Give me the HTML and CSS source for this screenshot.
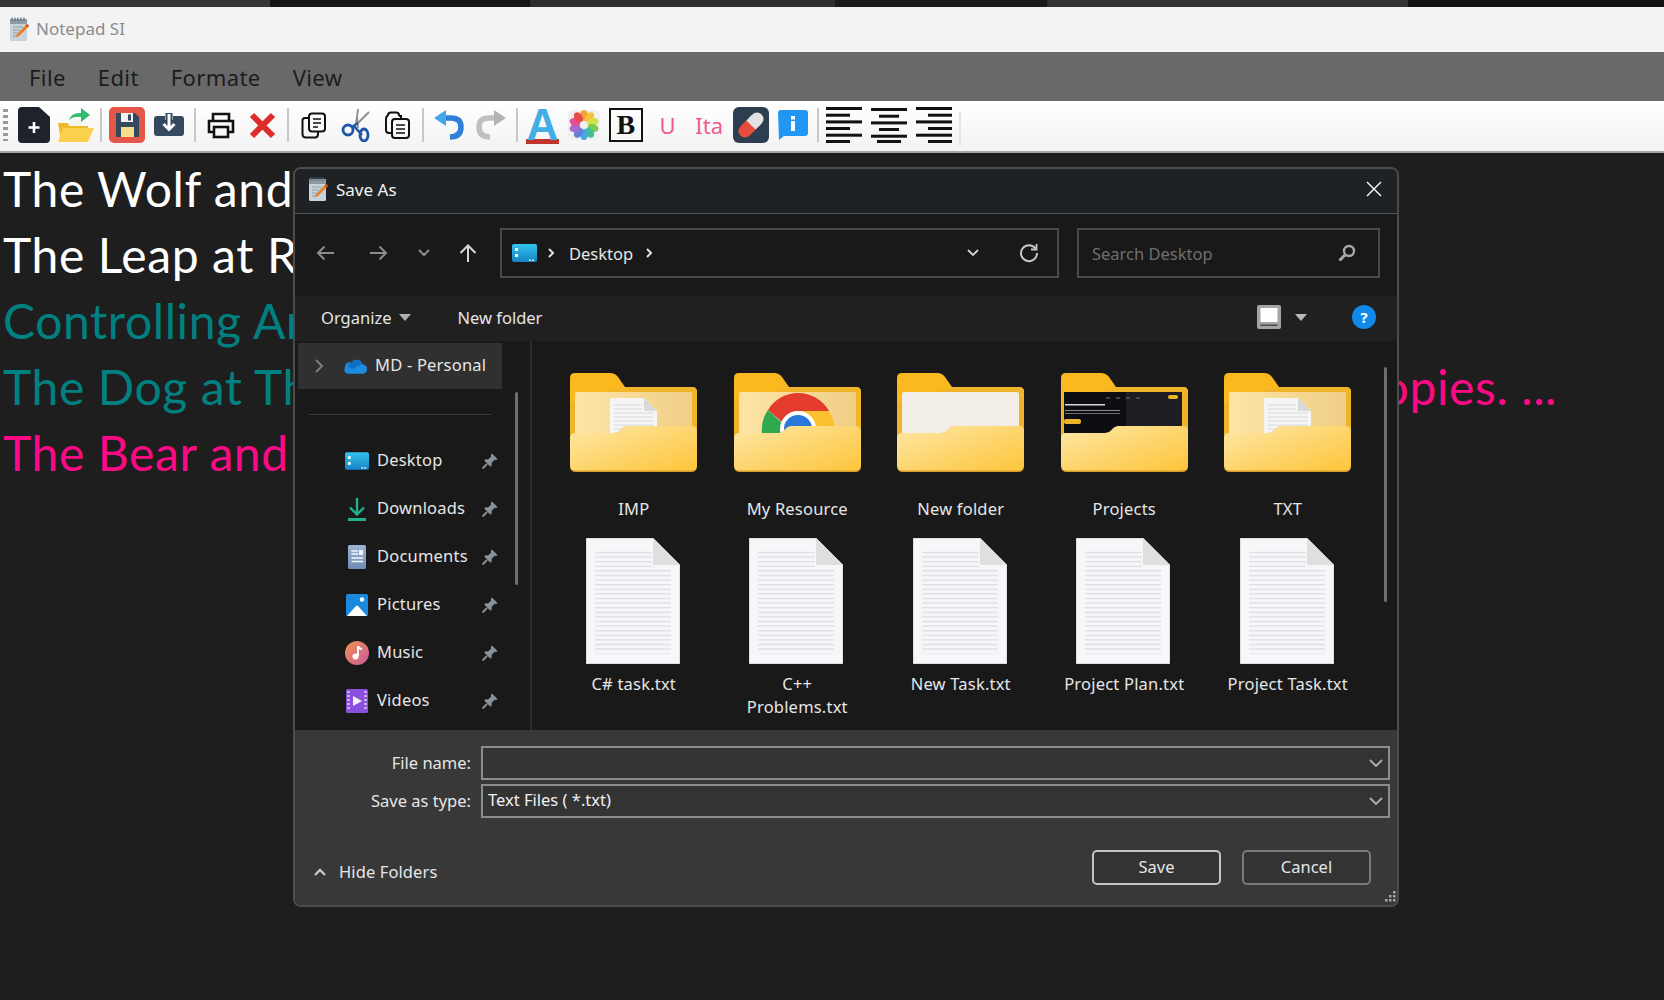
FILE: index.html
```html
<!DOCTYPE html>
<html lang="en">
<head>
<meta charset="utf-8">
<title>Notepad SI</title>
<link rel="stylesheet" href="styles.css">
</head>
<body>
<svg class="sprite" aria-hidden="true" xmlns="http://www.w3.org/2000/svg">
  <defs>
    <linearGradient id="gFront" x1="0" y1="0" x2="1" y2="1"><stop offset="0" stop-color="#fee7a6"/><stop offset="1" stop-color="#fdc53a"/></linearGradient>
    <linearGradient id="gPaper" x1="0" y1="0" x2="1" y2="0"><stop offset="0" stop-color="#fde4a6"/><stop offset="1" stop-color="#f0cf86"/></linearGradient>
    <linearGradient id="gDesk" x1="0" y1="0" x2="0" y2="1"><stop offset="0" stop-color="#35c3ee"/><stop offset="1" stop-color="#1583c6"/></linearGradient>
    <linearGradient id="gMusic" x1="0" y1="0" x2="1" y2="1"><stop offset="0" stop-color="#f0914a"/><stop offset="1" stop-color="#c95c9e"/></linearGradient>
    <linearGradient id="gDoc" x1="0" y1="0" x2="0" y2="1"><stop offset="0" stop-color="#9db5d2"/><stop offset="1" stop-color="#6f8db3"/></linearGradient>
    <pattern id="pLines" width="10" height="4.6" patternUnits="userSpaceOnUse"><rect width="10" height="1.3" fill="#dcdde1"/></pattern>
    <pattern id="pGrid" width="4" height="4" patternUnits="userSpaceOnUse"><path d="M0 0H4M0 0V4" stroke="#e6e0da" stroke-width=".5" fill="none"/></pattern>
  </defs>
  <symbol id="notepad" viewBox="0 0 19 24">
    <rect x="0" y="2" width="17" height="22" rx="1.5" fill="#c9d2d8"/>
    <rect x="0" y="2" width="17" height="5" fill="#8d9aa3"/>
    <path d="M2 0.5V4M5 0.5V4M8 0.5V4M11 0.5V4M14 0.5V4" stroke="#66737c" stroke-width="1.2"/>
    <path d="M3 10H13M3 13H10M3 16H8M3 19H7" stroke="#8ba0ae" stroke-width="1.1"/>
    <path d="M17 7L19 9L9 19L6 20.500L7 17Z" fill="#ee7d22"/>
    <path d="M17 7L19 9L17.500 10.500L15.500 8.500Z" fill="#d9472b"/>
  </symbol>
  <symbol id="pin" viewBox="0 0 18 18">
    <path d="M11 1.500L16.500 7L15 8.200L13.600 7.800L10.500 11L10.700 13.500L9.400 14.800L3.200 8.600L4.500 7.300L7 7.500L10.200 4.400L9.800 3Z" fill="#87929c"/>
    <path d="M6 12L1.500 16.500" stroke="#87929c" stroke-width="2"/>
  </symbol>
  <symbol id="desk" viewBox="0 0 25 18">
    <rect width="25" height="18" rx="2" fill="url(#gDesk)"/>
    <rect x="3" y="4" width="3" height="3" fill="#e8fbff"/><rect x="3" y="10" width="3" height="3" fill="#e8fbff"/>
    <rect x="17" y="15.500" width="2" height="1.500" fill="#d3f2fb"/><rect x="20" y="15.500" width="2" height="1.500" fill="#d3f2fb"/>
  </symbol>
  <symbol id="folderBack" viewBox="0 0 127 99">
    <path d="M5 0H40Q45 0 48 4L55 14H122Q127 14 127 19V66H0V5Q0 0 5 0Z" fill="#fbb91f"/>
    <path d="M55 14H122Q127 14 127 19V66H0V30Z" fill="#efb429"/>
  </symbol>
  <symbol id="folderPaper" viewBox="0 0 127 99">
    <rect x="5" y="19" width="117" height="47" rx="2" fill="url(#gPaper)"/>
  </symbol>
  <symbol id="folderFront" viewBox="0 0 127 99">
    <path d="M5 60H44Q48 60 51 56.500Q54 53 58 53H122Q127 53 127 58V93Q127 99 121 99H6Q0 99 0 93V65Q0 60 5 60Z" fill="#d79d2b"/>
    <path d="M5 60H44Q48 60 51 56.500Q54 53 58 53H122Q127 53 127 58V92Q127 97.500 121 97.500H6Q0 97.500 0 92V65Q0 60 5 60Z" fill="url(#gFront)"/>
  </symbol>
  <symbol id="miniDoc" viewBox="0 0 127 99">
    <path d="M40 25H74L87 38V66H40Z" fill="#f5f5f3"/>
    <path d="M74 25V38H87Z" fill="#d9d9d9"/>
    <path d="M44 32H72M44 36H72M44 40H84M44 44H84M44 48H84M44 52H84M44 56H84" stroke="#d8dade" stroke-width="1.200"/>
  </symbol>
  <symbol id="doc" viewBox="0 0 94 126">
    <path d="M0 0H67L94 27V126H0Z" fill="#f6f7f9"/>
    <path d="M0 0H67L94 27V126H0Z" fill="none" stroke="#b9bbbf" stroke-width=".8"/>
    <rect x="9" y="11" width="57" height="18" fill="url(#pLines)"/>
    <rect x="9" y="29.400" width="76" height="86" fill="url(#pLines)"/>
    <path d="M67 0V27H94Z" fill="#dfdfe0"/>
  </symbol>
</svg>

<div class="app">
  <div class="strip">
    <span class="seg seg-a"></span><span class="seg seg-b"></span><span class="seg seg-c"></span><span class="seg seg-d"></span><span class="seg seg-e"></span><span class="seg seg-f"></span>
  </div>
  <header class="titlebar">
    <svg class="app-icon"><use href="#notepad"/></svg>
    <span>Notepad SI</span>
  </header>
  <nav class="menubar">
    <span>File</span><span>Edit</span><span>Formate</span><span>View</span>
  </nav>
  <div class="toolbar">
    <span class="grip"></span>
    <span class="tool"><svg width="32" height="36" viewBox="0 0 32 36"><path d="M4 0H21L32 10V32Q32 36 28 36H4Q0 36 0 32V4Q0 0 4 0Z" fill="#1d222b"/><path d="M16 15V26M10.500 20.500H21.500" stroke="#fff" stroke-width="2.600"/></svg></span>
    <span class="tool"><svg width="37" height="36" viewBox="0 0 37 36"><path d="M1 16H11L14 19H31V34H4Z" fill="#f0b92a"/><path d="M11 16L16 12H25V19H12Z" fill="#f5f5f0"/><path d="M6 21H37L31 35H1Z" fill="#fbd04e"/><path d="M12 13Q15 5 24 6V1L33 8L24 15V10Q17 9 12 13Z" fill="#2ebd6b"/></svg></span>
    <span class="sep"></span>
    <span class="tool"><svg width="36" height="36" viewBox="0 0 36 36"><rect width="36" height="36" rx="5" fill="#e35648"/><path d="M7 6H26L30 10V30H7Z" fill="#34495e"/><rect x="12" y="6" width="12" height="9" fill="#f2f2f2"/><rect x="19" y="7.500" width="3" height="6" fill="#34495e"/><rect x="12" y="20" width="13" height="10" fill="#f6dd8b"/></svg></span>
    <span class="tool"><svg width="30" height="24" viewBox="0 0 30 24"><path d="M3 3H11V7H19V3H27Q30 3 30 6V20Q30 23 27 23H3Q0 23 0 20V6Q0 3 3 3Z" fill="#34495e"/><path d="M15 0V16M9.500 11L15 16.500L20.500 11" stroke="#34495e" stroke-width="7" fill="none"/><path d="M15 1V16M9.500 11L15 16.500L20.500 11" stroke="#fff" stroke-width="3" fill="none"/></svg></span>
    <span class="sep"></span>
    <span class="tool"><svg width="28" height="27" viewBox="0 0 28 27" fill="none" stroke="#111" stroke-width="2.600"><path d="M6 9V2H22V9"/><path d="M6 20H2V9H26V20H22"/><rect x="7" y="15" width="14" height="10"/></svg></span>
    <span class="tool"><svg width="27" height="27" viewBox="0 0 27 27"><path d="M3 3L24 24M24 3L3 24" stroke="#dc2d2a" stroke-width="6"/></svg></span>
    <span class="sep"></span>
    <span class="tool"><svg width="25" height="27" viewBox="0 0 25 27" fill="none" stroke="#111" stroke-width="2"><rect x="8" y="1.500" width="16" height="18" rx="3"/><path d="M8 6H4Q1.500 6 1.500 8.500V22Q1.500 25.500 5 25.500H14Q17 25.500 17 22V19.500"/><path d="M12 7H20M12 11H20M12 15H17" stroke-width="1.600"/></svg></span>
    <span class="tool"><svg width="30" height="34" viewBox="0 0 30 34" fill="none"><path d="M15 16L17 1M16 16L28 4M17 20L16 8" stroke="#8c8c8c" stroke-width="1.800"/><path d="M13 18L21 27" stroke="#1d55a8" stroke-width="2.500"/><circle cx="7" cy="22" r="5" stroke="#1d55a8" stroke-width="2.800"/><ellipse cx="23" cy="27" rx="4" ry="6" stroke="#1d55a8" stroke-width="2.800"/><path d="M11 19L17 15" stroke="#1d55a8" stroke-width="2.500"/></svg></span>
    <span class="tool"><svg width="25" height="28" viewBox="0 0 25 28" fill="none" stroke="#111" stroke-width="2"><path d="M14 5V4Q14 1.500 11 1.500H6Q3 1.500 3 4V5"/><path d="M3 5Q1 5 1 8V19Q1 22 4 22H7"/><rect x="7" y="8" width="17" height="19" rx="3"/><path d="M11 14H20M11 18H20M11 22H20" stroke-width="1.600"/><path d="M14 5H16V8"/></svg></span>
    <span class="sep"></span>
    <span class="tool"><svg width="30" height="30" viewBox="0 0 30 30" fill="none"><path d="M8 8H17Q27 8 27 17Q27 27 16 27" stroke="#2e7fd8" stroke-width="5.500"/><path d="M0 8L12 0V16Z" fill="#45a6ea"/></svg></span>
    <span class="tool"><svg width="30" height="30" viewBox="0 0 30 30" fill="none"><path d="M22 8H13Q3 8 3 17Q3 27 14 27" stroke="#c0c0c0" stroke-width="5.500"/><path d="M30 8L18 0V16Z" fill="#b4b4b4"/></svg></span>
    <span class="sep"></span>
    <span class="tool"><span class="tx-a">A</span></span>
    <span class="tool"><svg width="32" height="30" viewBox="-16 -15 32 30"><rect x="-16" y="-15" width="32" height="30" rx="5" fill="#f0f0f0"/><g opacity=".92"><ellipse cx="0" cy="-9.500" rx="4" ry="5.500" fill="#f59a23"/><ellipse cx="0" cy="-9.500" rx="4" ry="5.500" fill="#f6c026" transform="rotate(36)"/><ellipse cx="0" cy="-9.500" rx="4" ry="5.500" fill="#cfe03a" transform="rotate(72)"/><ellipse cx="0" cy="-9.500" rx="4" ry="5.500" fill="#6fc84a" transform="rotate(108)"/><ellipse cx="0" cy="-9.500" rx="4" ry="5.500" fill="#35b98a" transform="rotate(144)"/><ellipse cx="0" cy="-9.500" rx="4" ry="5.500" fill="#3aa2df" transform="rotate(180)"/><ellipse cx="0" cy="-9.500" rx="4" ry="5.500" fill="#5a74d8" transform="rotate(216)"/><ellipse cx="0" cy="-9.500" rx="4" ry="5.500" fill="#a35ec9" transform="rotate(252)"/><ellipse cx="0" cy="-9.500" rx="4" ry="5.500" fill="#e0458d" transform="rotate(288)"/><ellipse cx="0" cy="-9.500" rx="4" ry="5.500" fill="#ea3d3d" transform="rotate(324)"/></g></svg></span>
    <span class="tool"><span class="tx-b">B</span></span>
    <span class="tool"><span class="tx-u">U</span></span>
    <span class="tool"><span class="tx-u">Ita</span></span>
    <span class="tool"><svg width="36" height="36" viewBox="0 0 36 36"><rect width="36" height="36" rx="6" fill="#2c3e50"/><g transform="rotate(-45 18 18)"><rect x="3" y="11.500" width="18" height="13" rx="6.500" fill="#e74c3c"/><rect x="12" y="11.500" width="7" height="13" fill="#e74c3c"/><rect x="18" y="11.500" width="15" height="13" rx="6.500" fill="#e3e3e3"/><rect x="18" y="11.500" width="7" height="13" fill="#e3e3e3"/></g></svg></span>
    <span class="tool"><svg width="30" height="30" viewBox="0 0 30 30"><path d="M3 0H27Q30 0 30 3V23Q30 26 27 26H6L1 30L0 3Q0 0 3 0Z" fill="#2196f3"/><rect x="13" y="6" width="4" height="3.500" fill="#fff"/><rect x="13" y="11" width="4" height="10" fill="#fff"/></svg></span>
    <span class="sep sep-tight"></span>
    <span class="tool tool-wide"><svg width="36" height="36" viewBox="0 0 36 36" fill="#111"><rect y="0" width="36" height="3"/><rect y="6.700" width="24" height="3"/><rect y="13.400" width="36" height="3"/><rect y="20" width="24" height="3"/><rect y="26.700" width="36" height="3"/><rect y="33" width="24" height="3"/></svg></span>
    <span class="tool tool-wide"><svg width="36" height="36" viewBox="0 0 36 36" fill="#111"><rect y="1" width="36" height="3"/><rect x="8" y="7.700" width="20" height="3"/><rect y="14.400" width="36" height="3"/><rect x="8" y="21" width="20" height="3"/><rect y="27.700" width="36" height="3"/><rect x="6" y="33" width="24" height="3"/></svg></span>
    <span class="tool tool-wide"><svg width="36" height="36" viewBox="0 0 36 36" fill="#111"><rect y="0" width="36" height="3"/><rect x="12" y="6.700" width="24" height="3"/><rect y="13.400" width="36" height="3"/><rect x="12" y="20" width="24" height="3"/><rect y="26.700" width="36" height="3"/><rect x="12" y="33" width="24" height="3"/></svg></span>
    <span class="sep sep-faint"></span>
  </div>

  <main class="editor">
    <p class="line white">The Wolf and</p>
    <p class="line white">The Leap at R</p>
    <p class="line teal">Controlling Ar</p>
    <p class="line line-split"><span class="teal">The Dog at Th</span><span class="pink">copies. ...</span></p>
    <p class="line pink">The Bear and</p>
  </main>

  <section class="dialog">
    <div class="dlg-title">
      <svg class="dlg-icon"><use href="#notepad"/></svg>
      <span class="dlg-name">Save As</span>
      <svg class="dlg-close" viewBox="0 0 16 16"><path d="M1 1L15 15M15 1L1 15" stroke="#fff" stroke-width="1.400"/></svg>
    </div>

    <div class="dlg-nav">
      <svg class="nb nb-back" viewBox="0 0 18 16" fill="none" stroke="#8c8c8c" stroke-width="2"><path d="M18 8H2M8.500 1.500L2 8L8.500 14.500"/></svg>
      <svg class="nb nb-fwd" viewBox="0 0 18 16" fill="none" stroke="#8c8c8c" stroke-width="2"><path d="M0 8H16M9.500 1.500L16 8L9.500 14.500"/></svg>
      <svg class="nb-chev" viewBox="0 0 12 8" fill="none" stroke="#8c8c8c" stroke-width="2"><path d="M1 1L6 6L11 1"/></svg>
      <svg class="nb nb-up" viewBox="0 0 18 18" fill="none" stroke="#d8d8d8" stroke-width="2"><path d="M9 18V2M1.500 9L9 1.500L16.500 9"/></svg>
      <div class="address">
        <svg class="addr-icon"><use href="#desk"/></svg>
        <svg class="crumb" viewBox="0 0 6 10" fill="none" stroke="#e0e0e0" stroke-width="2"><path d="M1 1L5 5L1 9"/></svg>
        <span class="addr-text">Desktop</span>
        <svg class="crumb" viewBox="0 0 6 10" fill="none" stroke="#e0e0e0" stroke-width="2"><path d="M1 1L5 5L1 9"/></svg>
        <svg class="addr-down" viewBox="0 0 12 8" fill="none" stroke="#d0d0d0" stroke-width="1.800"><path d="M1 1L6 6L11 1"/></svg>
        <svg class="addr-refresh" viewBox="0 0 20 20" fill="none" stroke="#c8c8c8" stroke-width="2"><path d="M16.500 5.500A8 8 0 1 0 18 10"/><path d="M17.500 1V6.500H12" stroke-width="1.800"/></svg>
      </div>
      <div class="search">
        <span>Search Desktop</span>
        <svg class="search-icon" viewBox="0 0 18 18" fill="none" stroke="#a8a8a8" stroke-width="2.400"><circle cx="11" cy="7" r="5"/><path d="M7 11L1.500 16.500" stroke-width="3"/></svg>
      </div>
    </div>

    <div class="dlg-cmd">
      <span>Organize</span>
      <svg class="caret caret-org" viewBox="0 0 12 7"><path d="M0 0H12L6 7Z" fill="#b0b0b0"/></svg>
      <span class="new-folder">New folder</span>
      <svg class="view-icon" viewBox="0 0 24 24"><rect width="24" height="24" rx="2" fill="#a4a4a4"/><rect x="3.500" y="3" width="17" height="14" fill="#fff"/><rect x="3.500" y="19.500" width="17" height="1.500" fill="#4a4a4a"/></svg>
      <svg class="caret caret-view" viewBox="0 0 12 7"><path d="M0 0H12L6 7Z" fill="#b8b8b8"/></svg>
      <span class="help">?</span>
    </div>

    <div class="dlg-panes">
      <aside class="nav-pane">
        <div class="nav-row nav-selected">
          <svg class="nav-exp" viewBox="0 0 8 14" fill="none" stroke="#7d7d7d" stroke-width="2"><path d="M1 1L7 7L1 13"/></svg>
          <svg class="nav-icon" viewBox="0 0 25 16"><path d="M20 6A6 6 0 0 0 9 4.500A5 5 0 0 0 2 9Q0 15 5 16H21Q25 15 25 11Q25 7 20 6Z" fill="#1a8de0"/><path d="M9 4.500A6 6 0 0 1 20 6L10 11L5 9Q6 5 9 4.500Z" fill="#0f6fc4"/></svg>
          <span class="nav-label">MD - Personal</span>
        </div>
        <div class="nav-sep"></div>
        <div class="nav-row">
          <svg class="nav-icon"><use href="#desk"/></svg>
          <span class="nav-label">Desktop</span>
          <svg class="nav-pin"><use href="#pin"/></svg>
        </div>
        <div class="nav-row">
          <svg class="nav-icon" viewBox="0 0 24 24" fill="none" stroke="#1fb28c" stroke-width="2.400"><path d="M12 1V17M5 10.500L12 17.500L19 10.500"/><path d="M3 22.500H21" stroke-width="3"/></svg>
          <span class="nav-label">Downloads</span>
          <svg class="nav-pin"><use href="#pin"/></svg>
        </div>
        <div class="nav-row">
          <svg class="nav-icon" viewBox="0 0 24 24"><rect x="3" y="0" width="18" height="24" rx="1.500" fill="url(#gDoc)"/><path d="M6.500 6H13M6.500 9H13" stroke="#f2f5f9" stroke-width="1.500"/><rect x="14" y="5" width="4" height="5" fill="#f2f5f9"/><path d="M6.500 13H18M6.500 16.500H18" stroke="#f2f5f9" stroke-width="1.500"/></svg>
          <span class="nav-label">Documents</span>
          <svg class="nav-pin"><use href="#pin"/></svg>
        </div>
        <div class="nav-row">
          <svg class="nav-icon" viewBox="0 0 24 24"><rect x="1" y="1" width="22" height="22" rx="1.500" fill="#1a88dd"/><circle cx="17" cy="6.500" r="2.200" fill="#fff"/><path d="M2 23L11 13Q12 12 13 13L22 23Z" fill="#fff"/></svg>
          <span class="nav-label">Pictures</span>
          <svg class="nav-pin"><use href="#pin"/></svg>
        </div>
        <div class="nav-row">
          <svg class="nav-icon" viewBox="0 0 24 24"><circle cx="12" cy="12" r="12" fill="url(#gMusic)"/><path d="M13 5L13 15" stroke="#fff" stroke-width="2"/><circle cx="10.500" cy="15.500" r="3" fill="#fff"/><path d="M13 5Q14 8 17 8" stroke="#fff" stroke-width="2" fill="none"/></svg>
          <span class="nav-label">Music</span>
          <svg class="nav-pin"><use href="#pin"/></svg>
        </div>
        <div class="nav-row">
          <svg class="nav-icon" viewBox="0 0 24 24"><rect x="1" y="0" width="22" height="24" rx="1.500" fill="#8a4fdc"/><path d="M3.500 2V22M20.500 2V22" stroke="#d5c0f5" stroke-width="2.500" stroke-dasharray="2 2"/><path d="M8 7L17 12L8 17Z" fill="#f3eefc"/></svg>
          <span class="nav-label">Videos</span>
          <svg class="nav-pin"><use href="#pin"/></svg>
        </div>
        <span class="thumb thumb-nav"></span>
      </aside>

      <div class="files">
        <div class="file">
          <svg class="folder" viewBox="0 0 127 99"><use href="#folderBack"/><use href="#folderPaper"/><use href="#miniDoc"/><use href="#folderFront"/></svg>
          <span class="file-name">IMP</span>
        </div>
        <div class="file">
          <svg class="folder" viewBox="0 0 127 99"><use href="#folderBack"/><use href="#folderPaper"/>
            <g><path d="M64 20A35.500 35.500 0 0 1 95 38H64A17.500 17.500 0 0 0 48 49L34 37A35.500 35.500 0 0 1 64 20Z" fill="#e33b2e"/><path d="M95 38A35.500 35.500 0 0 1 99.500 66H78A17 17 0 0 0 75 43Q72 39 64 38Z" fill="#fbc02d"/><path d="M34 37L48 50L55 66H29A35.500 35.500 0 0 1 34 37Z" fill="#2fa84f"/><circle cx="64" cy="56" r="18" fill="#fff"/><circle cx="64" cy="56" r="14" fill="#2a78dc"/></g>
            <rect x="20" y="67" width="90" height="6" fill="#f8d576"/><use href="#folderFront"/></svg>
          <span class="file-name">My Resource</span>
        </div>
        <div class="file">
          <svg class="folder" viewBox="0 0 127 99"><use href="#folderBack"/><rect x="5" y="19" width="117" height="47" rx="2" fill="#f5efe9"/><rect x="5" y="19" width="117" height="47" fill="url(#pGrid)"/><use href="#folderFront"/></svg>
          <span class="file-name">New folder</span>
        </div>
        <div class="file">
          <svg class="folder" viewBox="0 0 127 99"><use href="#folderBack"/><rect x="3" y="19" width="118" height="47" fill="#0d0e12"/><rect x="65" y="19" width="56" height="47" fill="#1c1e24"/><rect x="4" y="31" width="40" height="1.500" fill="#d8d8d8"/><rect x="4" y="37" width="55" height="1" fill="#8a8a8a"/><rect x="4" y="40" width="55" height="1" fill="#6d6d6d"/><rect x="3" y="46" width="17" height="5" rx="2" fill="#f0b428"/><rect x="107" y="22" width="10" height="4" rx="2" fill="#f0b428"/><path d="M45 25H80" stroke="#777" stroke-width="1" stroke-dasharray="4 6"/><use href="#folderFront"/></svg>
          <span class="file-name">Projects</span>
        </div>
        <div class="file">
          <svg class="folder" viewBox="0 0 127 99"><use href="#folderBack"/><use href="#folderPaper"/><use href="#miniDoc"/><use href="#folderFront"/></svg>
          <span class="file-name">TXT</span>
        </div>
        <div class="file"><svg class="doc"><use href="#doc"/></svg><span class="file-name">C# task.txt</span></div>
        <div class="file"><svg class="doc"><use href="#doc"/></svg><span class="file-name">C++<br>Problems.txt</span></div>
        <div class="file"><svg class="doc"><use href="#doc"/></svg><span class="file-name">New Task.txt</span></div>
        <div class="file"><svg class="doc"><use href="#doc"/></svg><span class="file-name">Project Plan.txt</span></div>
        <div class="file"><svg class="doc"><use href="#doc"/></svg><span class="file-name">Project Task.txt</span></div>
        <span class="thumb thumb-files"></span>
      </div>
    </div>

    <div class="dlg-footer">
      <div class="form">
        <label class="form-label">File name:</label>
        <div class="combo"><span></span><svg class="combo-chev" viewBox="0 0 14 8" fill="none" stroke="#b0b0b0" stroke-width="1.800"><path d="M1 1L7 7L13 1"/></svg></div>
        <label class="form-label">Save as type:</label>
        <div class="combo"><span class="combo-text">Text Files ( *.txt)</span><svg class="combo-chev" viewBox="0 0 14 8" fill="none" stroke="#b0b0b0" stroke-width="1.800"><path d="M1 1L7 7L13 1"/></svg></div>
      </div>
      <div class="actions">
        <div class="hide-folders">
          <svg class="hide-chev" viewBox="0 0 12 8" fill="none" stroke="#c8c8c8" stroke-width="2.400"><path d="M1 7L6 2L11 7"/></svg>
          <span>Hide Folders</span>
        </div>
        <div class="buttons">
          <span class="btn btn-primary">Save</span>
          <span class="btn">Cancel</span>
        </div>
      </div>
      <svg class="resize" viewBox="0 0 12 12" fill="#a8a8a8"><rect x="9" y="0" width="2.500" height="2.500"/><rect x="5" y="4" width="2.500" height="2.500"/><rect x="9" y="4" width="2.500" height="2.500"/><rect x="1" y="8" width="2.500" height="2.500"/><rect x="5" y="8" width="2.500" height="2.500"/><rect x="9" y="8" width="2.500" height="2.500"/></svg>
    </div>
  </section>
</div>
</body>
</html>
```
FILE: styles.css
```css
* { box-sizing: border-box; }
html, body { margin: 0; padding: 0; }
body { background: #1e1e1e; font-family: "Noto Sans", sans-serif; }
svg { display: block; flex: none; }
.sprite { width: 0; height: 0; overflow: hidden; position: absolute; }

.app { position: relative; width: 1664px; height: 1000px; overflow: hidden; display: flex; flex-direction: column; background: #1e1e1e; }

.strip { height: 7px; display: flex; flex: none; }
.seg { display: block; height: 100%; }
.seg-a { width: 270px; background: #363636; }
.seg-b { width: 260px; background: #151515; }
.seg-c { width: 305px; background: #2e2e2e; }
.seg-d { width: 212px; background: #1b1b1b; }
.seg-e { width: 361px; background: #333; }
.seg-f { flex: 1; background: #131313; }

.titlebar { height: 45px; flex: none; background: #f3f3f3; display: flex; align-items: center; padding: 0 0 2px 10px; font-size: 17px; color: #8a8a8a; }
.app-icon { width: 19px; height: 24px; margin-right: 7px; }

.menubar { height: 49px; flex: none; background: #696969; display: flex; align-items: center; gap: 32px; padding-left: 29px; font-size: 22px; letter-spacing: .4px; color: #1c1c1c; }

.toolbar { height: 52px; flex: none; background: linear-gradient(#fff, #f4f4f4 90%); border-bottom: 2px solid #a5a5a5; display: flex; align-items: center; padding: 0 0 2px 3px; }
.grip { width: 5px; height: 32px; margin-right: 5px; background: repeating-linear-gradient(#999 0 3px, transparent 3px 6px); }
.tool { width: 41.7px; height: 44px; flex: none; display: flex; align-items: center; justify-content: center; }
.tool-wide { width: 45px; }
.sep { width: 2px; height: 34px; margin: 0 4px; background: #c8c8c8; flex: none; }
.sep-tight { margin-right: 2px; }
.sep-faint { background: #e4e4e4; margin-top: 8px; margin-left: 3px; }
.tx-a { font: 700 44px/38px "Liberation Sans", sans-serif; color: #41aee5; width: 33px; height: 38px; text-align: center; border-bottom: 5px solid #c0342e; display: block; }
.tx-b { font: 700 28px/28px "Liberation Serif", serif; color: #111; width: 34px; height: 34px; text-align: center; border: 2px solid #111; box-shadow: inset 0 0 0 1px #fff; display: block; padding-top: 1px; }
.tx-u { font: 400 22px/28px "Noto Sans", sans-serif; color: #ef5b8c; }

.editor { flex: 1; padding: 3px 107px 0 3px; min-height: 0; }
.line { margin: 0; height: 66px; font: 400 48px/66px "Lato", sans-serif; letter-spacing: .6px; white-space: nowrap; }
.line-split { display: flex; justify-content: space-between; }
.white { color: #fff; }
.teal { color: #008080; }
.pink { color: #fb0a85; }

.dialog { position: absolute; left: 293px; top: 167px; width: 1106px; height: 740px; border: 2px solid #4c4c4c; border-radius: 8px; overflow: hidden; display: flex; flex-direction: column; font-size: 16.5px; color: #e6e6e6; background: #191919; }

.dlg-title { height: 45px; flex: none; background: #1f2224; border-bottom: 1px solid #555; display: flex; align-items: center; padding: 0 15px 4px 14px; }
.dlg-icon { width: 19px; height: 24px; margin-right: 8px; }
.dlg-name { flex: 1; font-size: 17px; color: #f2f2f2; }
.dlg-close { width: 16px; height: 16px; }

.dlg-nav { height: 82px; flex: none; background: #191919; display: flex; align-items: center; padding-bottom: 4px; }
.nb { width: 18px; height: 18px; }
.nb-back { margin-left: 21px; }
.nb-fwd { margin-left: 36px; }
.nb-chev { width: 12px; height: 8px; margin-left: 30px; }
.nb-up { margin-left: 29px; }
.address { width: 559px; height: 50px; margin-left: 23px; border: 2px solid #4a4a4a; display: flex; align-items: center; padding-left: 10px; }
.addr-icon { width: 25px; height: 18px; margin-right: 11px; }
.crumb { width: 6px; height: 10px; }
.addr-text { margin: 0 13px 0 15px; }
.addr-down { width: 12px; height: 8px; margin-left: auto; }
.addr-refresh { width: 20px; height: 20px; margin: 0 18px 0 40px; }
.search { width: 303px; height: 50px; margin-left: 18px; border: 2px solid #4a4a4a; display: flex; align-items: center; justify-content: space-between; padding: 0 22px 0 13px; color: #6f6f6f; }
.search-icon { width: 18px; height: 18px; }

.dlg-cmd { height: 45px; flex: none; background: #202020; display: flex; align-items: center; padding: 0 21px 3px 26px; }
.caret { width: 12px; height: 7px; }
.caret-org { margin-left: 8px; }
.new-folder { margin-left: 46px; margin-right: auto; }
.view-icon { width: 24px; height: 24px; }
.caret-view { margin-left: 14px; }
.help { width: 24px; height: 24px; margin-left: 45px; border-radius: 50%; background: #0f8ae8; color: #fff; font: 700 15px/24px "Noto Sans", sans-serif; text-align: center; }

.dlg-panes { height: 389px; flex: none; display: flex; background: #191919; }
.nav-pane { position: relative; width: 237px; flex: none; border-right: 2px solid #2b2b2b; padding: 2px 0 0 3px; }
.nav-row { width: 204px; height: 48px; display: flex; align-items: center; padding-left: 47px; padding-right: 3px; }
.nav-selected { height: 46px; background: #303030; padding-left: 17px; }
.nav-exp { width: 8px; height: 14px; margin-right: 20px; }
.nav-icon { width: 24px; height: 24px; margin-right: 8px; }
.nav-label { flex: 1; padding-bottom: 3px; white-space: nowrap; letter-spacing: .2px; }
.nav-pin { width: 18px; height: 18px; }
.nav-sep { width: 182px; height: 1px; margin: 25px 0 22px 11px; background: #3a3a3a; }
.thumb { position: absolute; width: 3px; background: #6e6e6e; border-radius: 2px; }
.thumb-nav { left: 220px; top: 51px; height: 193px; }
.thumb-files { left: 852px; top: 26px; height: 235px; }

.files { position: relative; flex: 1; display: grid; grid-template-columns: repeat(5, 163.5px); grid-template-rows: 175px 175px; align-items: start; padding: 22px 0 0 20px; }
.file { display: flex; flex-direction: column; align-items: center; height: 175px; }
.folder { width: 127px; height: 99px; margin: 10px 0 17px; }
.doc { width: 94px; height: 126px; margin-right: 2px; }
.file-name { margin-top: 8px; text-align: center; line-height: 23px; white-space: nowrap; letter-spacing: .2px; }

.dlg-footer { position: relative; flex: 1; background: #383838; padding: 16px 26px 0 0; }
.form { display: grid; grid-template-columns: 176px 909px; column-gap: 10px; row-gap: 4px; grid-auto-rows: 34px; align-items: center; }
.form-label { text-align: right; color: #e6e6e6; padding-bottom: 2px; }
.combo { height: 34px; background: #333; border: 2px solid #8c8c8c; display: flex; align-items: center; justify-content: space-between; padding: 0 5px 0 5px; color: #f0f0f0; width: 909px; }
.combo-text { padding-bottom: 3px; }
.combo-chev { width: 14px; height: 8px; }
.actions { display: flex; justify-content: space-between; align-items: flex-start; margin-top: 32px; }
.hide-folders { display: flex; align-items: center; padding: 10px 0 0 19px; letter-spacing: .1px; }
.hide-chev { width: 12px; height: 8px; margin-right: 13px; }
.buttons { display: flex; gap: 21px; }
.btn { width: 129px; height: 35px; border: 2px solid #7a7a7a; border-radius: 5px; background: #333; text-align: center; line-height: 30px; }
.btn-primary { border-color: #c4c4c4; }
.resize { position: absolute; right: 1px; bottom: 2px; width: 12px; height: 12px; }
```
